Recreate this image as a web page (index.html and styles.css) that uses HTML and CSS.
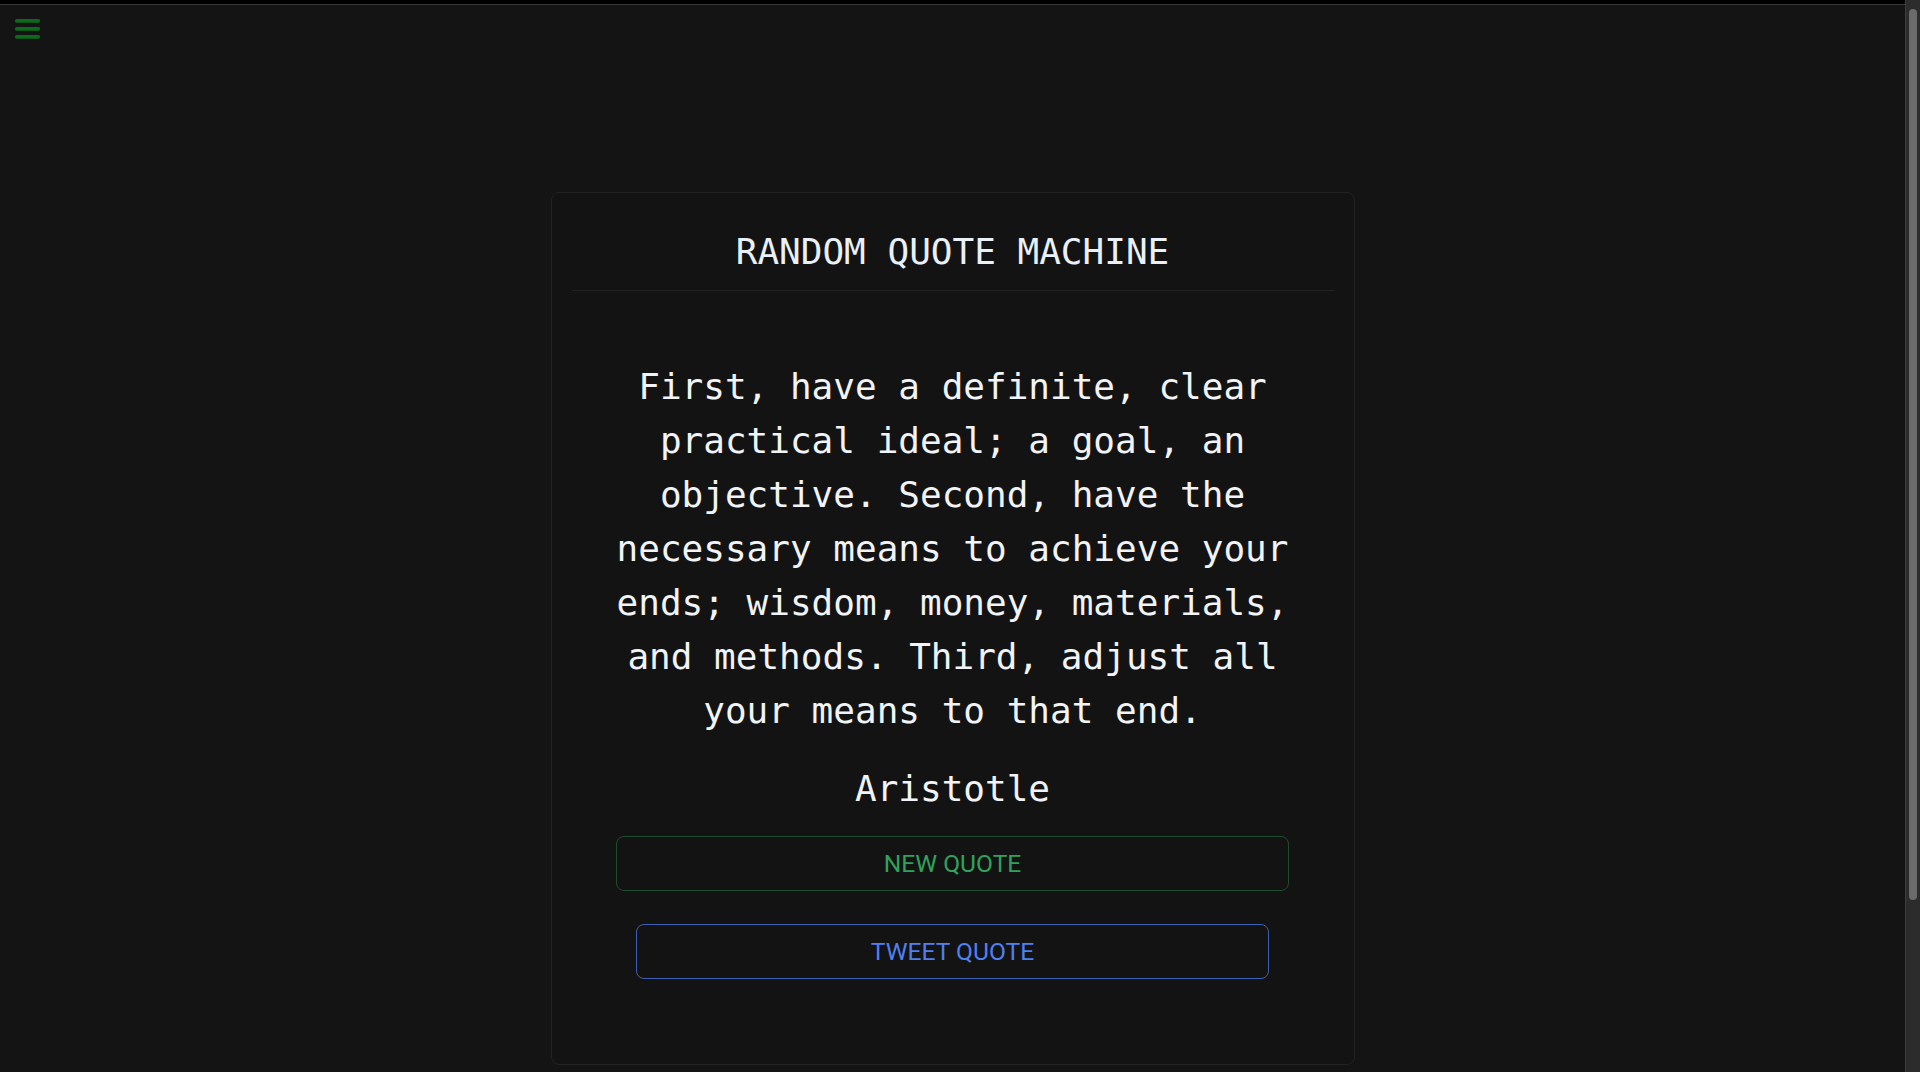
FILE: index.html
```html
<!DOCTYPE html>
<html lang="en">
<head>
<meta charset="utf-8">
<title>Random Quote Machine</title>
<link rel="stylesheet" href="styles.css">
</head>
<body>
  <div class="topbar"></div>
  <div class="toolbar">
    <button class="menu-toggle" aria-label="Menu">
      <svg width="25" height="20" viewBox="0 0 25 20" aria-hidden="true">
        <rect x="0" y="0" width="25" height="3.7" rx="1.6"/>
        <rect x="0" y="8" width="25" height="3.7" rx="1.6"/>
        <rect x="0" y="16" width="25" height="3.7" rx="1.6"/>
      </svg>
    </button>
  </div>
  <main class="main">
    <section class="card" id="quote-box">
      <header class="card-header">
        <h1 class="title">RANDOM QUOTE MACHINE</h1>
      </header>
      <div class="card-body">
        <p class="quote" id="text">First, have a definite, clear practical ideal; a goal, an objective. Second, have the necessary means to achieve your ends; wisdom, money, materials, and methods. Third, adjust all your means to that end.</p>
        <p class="author" id="author">Aristotle</p>
        <button class="btn btn-new" id="new-quote">NEW QUOTE</button>
        <a class="btn btn-tweet" id="tweet-quote" href="#">TWEET QUOTE</a>
      </div>
    </section>
  </main>
  <div class="scrollbar" aria-hidden="true"><div class="scrollbar-thumb"></div></div>
</body>
</html>
```
FILE: styles.css
```css
html {
  background: #141414;
  scrollbar-width: none;
}
html::-webkit-scrollbar {
  display: none;
}
body {
  margin: 0 15px 0 0;
  background: #141414;
  color: #eef2f7;
  font-family: "DejaVu Sans Mono", "Liberation Mono", monospace;
}
.topbar {
  height: 4px;
  background: #000;
  border-bottom: 1px solid #3a3a3a;
}
.toolbar {
  display: flex;
  padding: 14px 0 0 15px;
}
.menu-toggle {
  display: block;
  padding: 0;
  margin: 0;
  border: 0;
  background: none;
  color: #0b6a1b;
  line-height: 0;
}
.menu-toggle svg {
  display: block;
  fill: currentColor;
}
.main {
  display: flex;
  justify-content: center;
  padding: 153px 0 40px;
}
.card {
  box-sizing: border-box;
  width: 804px;
  border: 1px solid #232323;
  border-radius: 8px;
  padding: 0 20px 85px;
  background: #131313;
}
.card-header {
  padding: 38px 0 18px;
  border-bottom: 1px solid #222222;
  text-align: center;
}
.title {
  margin: 0;
  font-size: 36px;
  font-weight: normal;
  line-height: normal;
  color: #eaf0f8;
}
.card-body {
  display: flex;
  flex-direction: column;
  align-items: center;
}
.quote {
  width: 673px;
  margin: 69px 0 0;
  font-size: 36px;
  line-height: 54px;
  text-align: center;
  color: #f1f3f6;
}
.author {
  margin: 30px 0 0;
  font-size: 36px;
  line-height: normal;
  color: #f1f3f6;
}
.btn {
  box-sizing: border-box;
  display: flex;
  align-items: center;
  justify-content: center;
  height: 55px;
  border-radius: 8px;
  background: transparent;
  font-family: Roboto, "Liberation Sans", sans-serif;
  font-size: 24.6px;
  text-decoration: none;
  padding: 0;
}
.btn-new {
  width: 673px;
  margin-top: 27px;
  border: 1px solid #1d4d2e;
  color: #2fa35c;
}
.btn-tweet {
  width: 633px;
  margin-top: 33px;
  border: 1px solid #3b60b6;
  color: #4f80f2;
}
.scrollbar {
  position: fixed;
  top: 0;
  right: 0;
  box-sizing: border-box;
  width: 15px;
  height: 100%;
  background: #2c2c2c;
  border-left: 1px solid #3e3e3e;
}
.scrollbar-thumb {
  position: absolute;
  top: 9px;
  left: 3px;
  width: 8px;
  height: 891px;
  border-radius: 4px;
  background: #6b6b6b;
}
```
